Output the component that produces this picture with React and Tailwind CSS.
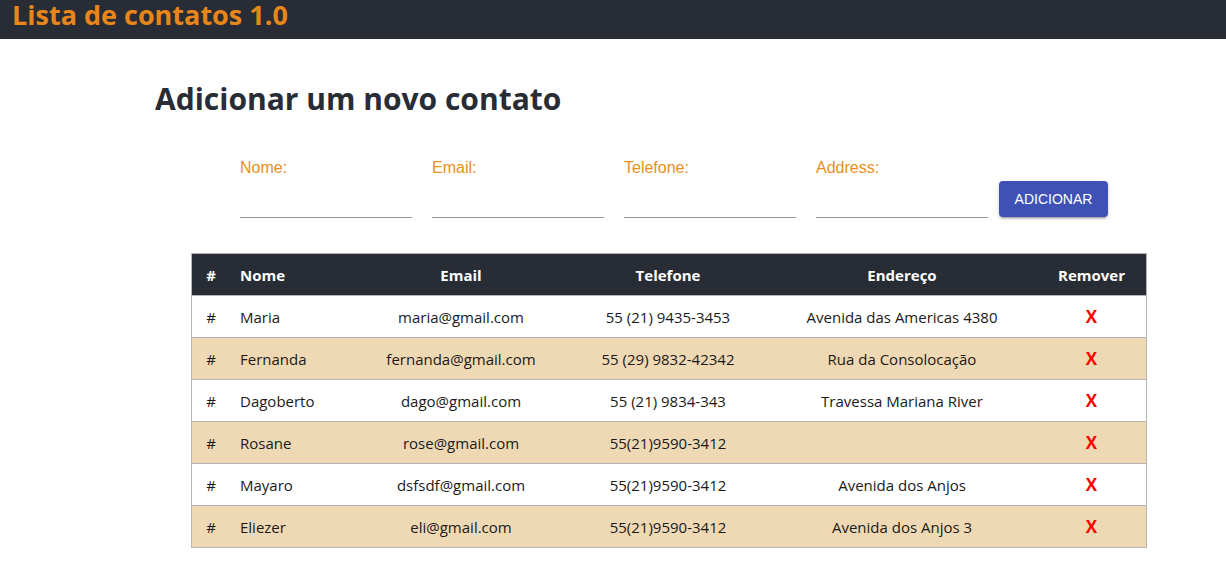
import React from "react";

const rows = [
  ["Maria", "maria@gmail.com", "55 (21) 9435-3453", "Avenida das Americas 4380"],
  ["Fernanda", "fernanda@gmail.com", "55 (29) 9832-42342", "Rua da Consolocação"],
  ["Dagoberto", "dago@gmail.com", "55 (21) 9834-343", "Travessa Mariana River"],
  ["Rosane", "rose@gmail.com", "55(21)9590-3412", ""],
  ["Mayaro", "dsfsdf@gmail.com", "55(21)9590-3412", "Avenida dos Anjos"],
  ["Eliezer", "eli@gmail.com", "55(21)9590-3412", "Avenida dos Anjos 3"],
];

const segoe = { fontFamily: '"Open Sans", "Noto Sans", sans-serif' };

function Field({ label }) {
  return (
    <div className="flex flex-col w-[172px] h-[60px] justify-between">
      <span className="text-[16px] leading-[20px] text-[#e8901a] font-['Liberation_Sans',Arial,sans-serif]">{label}</span>
      <div className="h-[1px] bg-[#949494]" />
    </div>
  );
}

export default function App() {
  return (
    <div className="min-h-[583px] bg-white" style={segoe}>
      <div className="h-[39px] bg-[#282c34] flex items-start pl-[12px]">
        <h1 className="text-[27px] font-bold text-[#e8861a] leading-[30px]">Lista de contatos 1.0</h1>
      </div>
      <div className="pl-[155px] pt-[42px]">
        <h2 className="text-[30px] font-bold text-[#282c34] leading-[36px]">Adicionar um novo contato</h2>
      </div>
      <div className="flex items-end pl-[240px] mt-[41px] gap-[20px]">
        <Field label="Nome:" />
        <Field label="Email:" />
        <Field label="Telefone:" />
        <Field label="Address:" />
        <button className="-ml-[9px] mb-[1px] w-[109px] h-[36px] rounded-[4px] bg-[#3f51b5] text-white text-[14px] font-['Liberation_Sans',Arial,sans-serif] shadow-[0_3px_1px_-2px_rgba(0,0,0,0.2),0_2px_2px_0_rgba(0,0,0,0.14),0_1px_5px_0_rgba(0,0,0,0.12)]">
          ADICIONAR
        </button>
      </div>
      <div className="ml-[191px] mt-[35px] w-[956px] border border-[#b4b4b4] text-[15px]">
        <div className="grid grid-cols-[38px_123px_216px_198px_270px_109px] h-[41px] items-center bg-[#282c34] text-white font-bold pt-[1px]">
          <div className="text-center">#</div>
          <div className="pl-[10px]">Nome</div>
          <div className="text-center">Email</div>
          <div className="text-center">Telefone</div>
          <div className="text-center">Endereço</div>
          <div className="text-center">Remover</div>
        </div>
        {rows.map((r, i) => (
          <div
            key={i}
            className={`grid grid-cols-[38px_123px_216px_198px_270px_109px] h-[42px] items-center border-t border-[#b4b4b4] text-[#1a1a1a] pt-[1px] ${i % 2 === 1 ? "bg-[#eed9b4]" : "bg-white"}`}
          >
            <div className="text-center">#</div>
            <div className="pl-[10px]">{r[0]}</div>
            <div className="text-center">{r[1]}</div>
            <div className="text-center">{r[2]}</div>
            <div className="text-center">{r[3]}</div>
            <div className="text-center text-[#ff0000] font-bold text-[17px]">X</div>
          </div>
        ))}
      </div>
    </div>
  );
}
